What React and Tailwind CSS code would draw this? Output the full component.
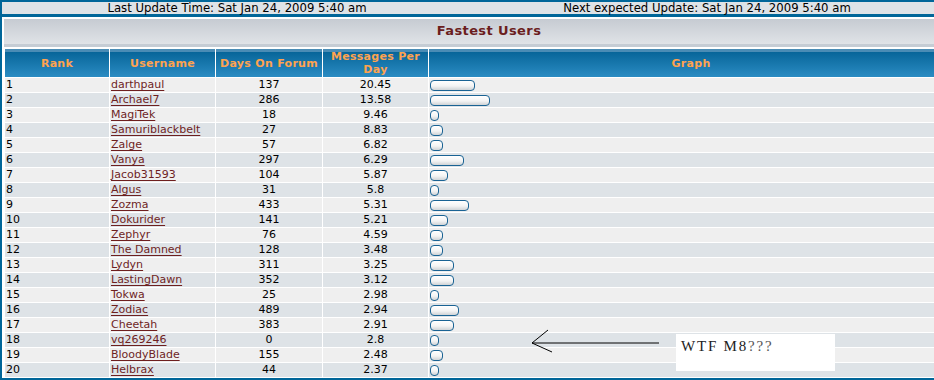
import React from 'react';

const users = [
  ['darthpaul', 137, '20.45', 45],
  ['Archael7', 286, '13.58', 60],
  ['MagiTek', 18, '9.46', 9],
  ['Samuriblackbelt', 27, '8.83', 13],
  ['Zalge', 57, '6.82', 13],
  ['Vanya', 297, '6.29', 34],
  ['Jacob31593', 104, '5.87', 18],
  ['Algus', 31, '5.8', 9],
  ['Zozma', 433, '5.31', 39],
  ['Dokurider', 141, '5.21', 18],
  ['Zephyr', 76, '4.59', 13],
  ['The Damned', 128, '3.48', 13],
  ['Lydyn', 311, '3.25', 24],
  ['LastingDawn', 352, '3.12', 24],
  ['Tokwa', 25, '2.98', 9],
  ['Zodiac', 489, '2.94', 29],
  ['Cheetah', 383, '2.91', 24],
  ['vq269246', 0, '2.8', 9],
  ['BloodyBlade', 155, '2.48', 13],
  ['Helbrax', 44, '2.37', 9],
];

const head =
  'flex items-center justify-center text-center font-bold text-[11px] leading-[13px] tracking-[0.3px] text-[#ffa34f] bg-[linear-gradient(to_bottom,#4a8cb5_0px,#4a8cb5_3px,#076599_3px,#2b8cc3_100%)]';

export default function App() {
  return (
    <div className="relative w-[934px] h-[380px] overflow-hidden bg-white border-l-2 border-t-2 border-b-2 border-[#006699] font-['DejaVu_Sans',sans-serif] text-black">
      {/* update times */}
      <div className="w-[940px] h-[12px] bg-[#dee3e7] grid grid-cols-2 text-[11.7px] leading-[12px]">
        <div className="text-center">Last Update Time: Sat Jan 24, 2009 5:40 am</div>
        <div className="text-center">Next expected Update: Sat Jan 24, 2009 5:40 am</div>
      </div>
      <div className="h-[3px] w-[980px] bg-[#006699]" />

      {/* title */}
      <div className="pt-[2px] pl-[2px]">
        <div className="w-[970px] h-[28px] border-b-[3px] border-[#c5ccd4] bg-[linear-gradient(to_bottom,#c6cbd2,#e0e3e7)] flex items-center justify-center">
          <span className="text-[13px] font-bold tracking-[0.4px] text-[#6b1e1e] pb-px">Fastest Users</span>
        </div>
      </div>

      {/* table */}
      <div className="pt-[2px] pl-[3px]">
        <div className="grid grid-cols-[104px_105px_106px_105px_524px] gap-px w-[948px]">
          <div className={`${head} h-[28px]`}>Rank</div>
          <div className={head}>Username</div>
          <div className={head}>Days On Forum</div>
          <div className={head}>Messages Per<br />Day</div>
          <div className={head}>Graph</div>

          {users.map(([name, days, mpd, bar], i) => {
            const bg = i % 2 === 0 ? 'bg-[#efefef]' : 'bg-[#dee3e7]';
            return (
              <React.Fragment key={name}>
                <div className={`${bg} h-[14px] text-[11px] leading-[14px] pl-px`}>{i + 1}</div>
                <div className={`${bg} text-[11px] leading-[14px] pl-px`}>
                  <a href="#" className="text-[#6e1f1f] underline underline-offset-[2px]">{name}</a>
                </div>
                <div className={`${bg} text-[11px] leading-[14px] text-center`}>{days}</div>
                <div className={`${bg} text-[11px] leading-[14px] text-center`}>{mpd}</div>
                <div className={`${bg} flex items-center pl-px`}>
                  <div
                    className="h-[11px] rounded-[4px] border-[1.5px] border-[#1a6394] bg-[linear-gradient(to_bottom,#ffffff,#f4f4f4_55%,#cfd3d6)]"
                    style={{ width: bar }}
                  />
                </div>
              </React.Fragment>
            );
          })}
        </div>
      </div>

      {/* scribbled note */}
      <svg className="absolute left-[524px] top-[325px]" width="140" height="32" viewBox="0 0 140 32">
        <line x1="6" y1="16" x2="133" y2="16" stroke="#000" strokeWidth="1" />
        <line x1="6" y1="16" x2="22" y2="3" stroke="#000" strokeWidth="1" />
        <line x1="6" y1="16" x2="26" y2="25" stroke="#000" strokeWidth="1" />
      </svg>
      <div className="absolute left-[674px] top-[332px] w-[159px] h-[37px] bg-white pl-[5px] pt-[3px] font-['Liberation_Serif',serif] text-[15px] leading-[18px] tracking-[1.8px] text-[#222]">
        WTF M8<span className="text-[#555]">???</span>
      </div>
    </div>
  );
}
